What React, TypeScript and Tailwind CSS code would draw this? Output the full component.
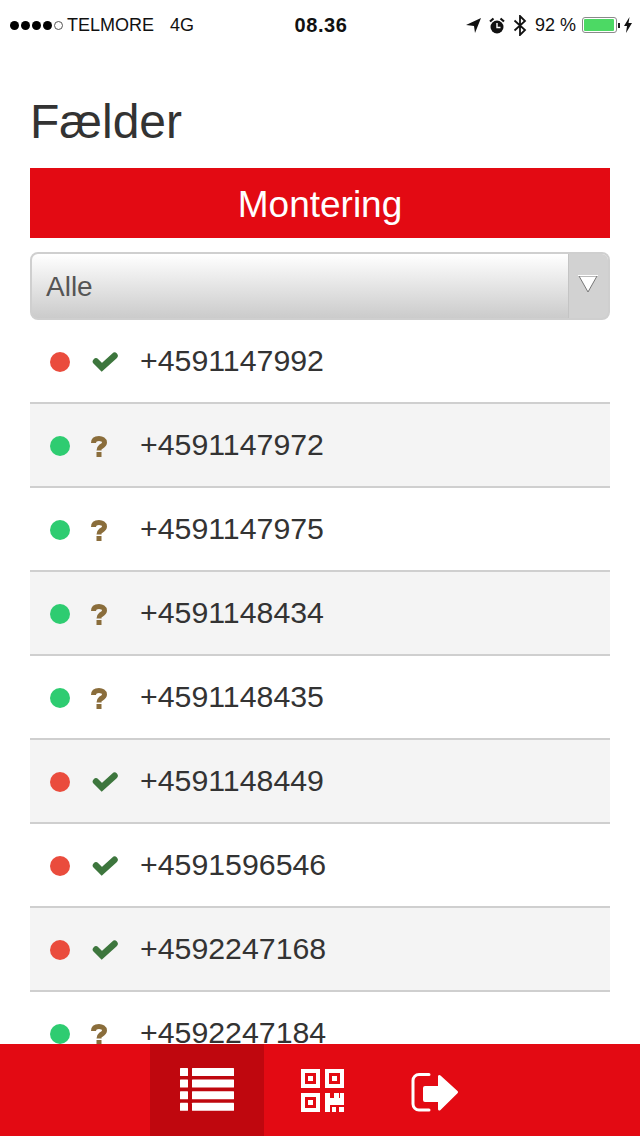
const traps = [
  { number: "+4591147992", ok: true },
  { number: "+4591147972", ok: false },
  { number: "+4591147975", ok: false },
  { number: "+4591148434", ok: false },
  { number: "+4591148435", ok: false },
  { number: "+4591148449", ok: true },
  { number: "+4591596546", ok: true },
  { number: "+4592247168", ok: true },
  { number: "+4592247184", ok: false },
];

function StatusBar() {
  return (
    <div className="flex h-[50px] items-center justify-between bg-white pl-[10px] pr-[8px] text-[18px] leading-none text-[#111]">
      <div className="flex w-[230px] items-center">
        <div className="flex items-center gap-[2px]">
          {[0, 1, 2, 3].map((i) => (
            <span key={i} className="h-[9px] w-[9px] rounded-full bg-black" />
          ))}
          <span className="h-[9px] w-[9px] rounded-full border border-[#555]" />
        </div>
        <span className="ml-[4px]">TELMORE</span>
        <span className="ml-[16px]">4G</span>
      </div>
      <span className="text-[20px] font-bold tracking-[0.6px]">08.36</span>
      <div className="flex w-[230px] items-center justify-end">
        <svg width="15" height="15" viewBox="0 0 15 15" className="mr-[8px]">
          <path d="M0 7 15 0 9 15 8 8z" fill="#111" />
        </svg>
        <svg width="16" height="17" viewBox="0 0 16 17" className="mr-[8px]">
          <circle cx="8" cy="10" r="6.500" fill="#111" />
          <path d="M1 4.500 4.500 1.500M15 4.500 11.500 1.500" stroke="#111" strokeWidth="2.200" fill="none" />
          <path d="M8 6v4.500h3.500" stroke="#fff" strokeWidth="1.400" fill="none" />
        </svg>
        <svg width="14" height="21" viewBox="0 0 14 21" className="mr-[8px]">
          <path d="M1.500 5.500 12 15 7 20V1l5 5L1.500 15.500" stroke="#111" strokeWidth="1.800" fill="none" />
        </svg>
        <span className="mr-[1px]">92 %</span>
        <div className="ml-[5px] flex h-[16px] w-[35px] items-center rounded-[3px] border border-[#8a8a8a] p-[1px]">
          <div className="h-full w-[30px] rounded-[1px] bg-[#4cd964]" />
        </div>
        <span className="ml-[1px] h-[5px] w-[2px] bg-[#222]" />
        <svg width="8" height="16" viewBox="0 0 8 16" className="ml-[4px]">
          <path d="M5.500 0 0 9h3l-1 7 6-10H4.500z" fill="#111" />
        </svg>
      </div>
    </div>
  );
}

function SelectBox() {
  return (
    <div className="mt-[14px] flex h-[68px] items-stretch rounded-[8px] border-2 border-[#cfcfcf] bg-gradient-to-b from-white to-[#cbcbcb]">
      <span className="flex flex-1 items-center pl-[14px] pt-[2px] text-[28px] text-[#555]">Alle</span>
      <div className="flex w-[40px] justify-center rounded-r-[6px] border-l border-[#c4c4c4] bg-[#d2d2d2] pr-[2px] pt-[21px]">
        <svg width="20" height="18" viewBox="0 0 20 18">
          <path d="M1 1h18L10 17z" fill="#fff" stroke="#777" strokeWidth="1" />
          <path d="M0 0h20v1H0z" fill="#fff" />
        </svg>
      </div>
    </div>
  );
}

function CheckIcon() {
  return (
    <svg width="26" height="20" viewBox="0 0 26 20" className="ml-[1px]">
      <path d="M4 9.500 9.800 15.300 22.500 3.800" stroke="#3d763d" strokeWidth="6.500" strokeLinecap="round" fill="none" />
    </svg>
  );
}

function QuestionIcon() {
  return (
    <svg width="16" height="21" viewBox="0 0 16 21">
      <path
        d="M2.500 7C2.500 3.500 5 2.500 8 2.500c3 0 5.500 1.500 5.500 4 0 2.500-2.500 3.500-4 4.500C8.500 11.700 8 12.500 8 14.500"
        stroke="#8a6d3b"
        strokeWidth="5"
        fill="none"
      />
      <rect x="5.500" y="16" width="5" height="5" fill="#8a6d3b" />
    </svg>
  );
}

function TrapRow({ number, ok, index }: { number: string; ok: boolean; index: number }) {
  return (
    <div
      className={`flex h-[84px] shrink-0 items-center border-b-2 border-[#cfcfcf] pl-[20px] pt-[2px] ${
        index % 2 === 1 ? "bg-[#f4f4f4]" : "bg-white"
      }`}
    >
      <span className={`h-[20px] w-[20px] rounded-full ${ok ? "bg-[#ea4c3d]" : "bg-[#2ecc71]"}`} />
      <span className="ml-[21px] flex w-[29px]">{ok ? <CheckIcon /> : <QuestionIcon />}</span>
      <span className="ml-[20px] pb-[2px] text-[30.300px] text-[#333]">{number}</span>
    </div>
  );
}

function Finder({ x, y }: { x: number; y: number }) {
  return (
    <g>
      <rect x={x + 2} y={y + 2} width="15" height="15" fill="none" stroke="#fff" strokeWidth="4" />
      <rect x={x + 7} y={y + 7} width="5" height="5" fill="#fff" />
    </g>
  );
}

function QrIcon() {
  return (
    <svg width="43" height="43" viewBox="0 0 43 43" fill="#fff">
      <Finder x={0} y={0} />
      <Finder x={24} y={0} />
      <Finder x={0} y={24} />
      <rect x="24" y="24" width="5" height="19" />
      <rect x="24" y="29" width="19" height="7" />
      <rect x="33" y="24" width="5" height="5" />
      <rect x="39" y="24" width="4" height="5" />
      <rect x="31" y="38" width="4" height="5" />
      <rect x="38" y="38" width="5" height="5" />
    </svg>
  );
}

export default function App() {
  return (
    <div className="relative h-[1136px] w-[640px] overflow-hidden bg-white font-['Liberation_Sans',Arial,sans-serif]">
      <StatusBar />
      <div className="px-[30px]">
        <h1 className="mt-[42px] text-[48px] leading-[60px] text-[#333]">Fælder</h1>
        <div className="mt-[16px] flex h-[70px] items-center justify-center bg-[#e30a13] pt-[3px] text-[37px] text-white">
          Montering
        </div>
        <SelectBox />
        <div className="flex flex-col">
          {traps.map((t, i) => (
            <TrapRow key={t.number} number={t.number} ok={t.ok} index={i} />
          ))}
        </div>
      </div>

      <nav className="absolute inset-x-0 bottom-0 flex h-[92px] bg-[#e30a13] pl-[150px] text-white">
        <div className="flex w-[114px] items-center justify-center bg-[#bf070e]">
          <svg width="54" height="44" viewBox="0 0 54 44" fill="#fff">
            {[0, 1, 2, 3].map((i) => (
              <g key={i}>
                <rect x="0" y={i * 11.600} width="8" height="8" rx="0.500" />
                <rect x="12" y={i * 11.600} width="42" height="8" rx="0.500" />
              </g>
            ))}
          </svg>
        </div>
        <div className="flex w-[116px] items-center justify-center">
          <QrIcon />
        </div>
        <div className="flex w-[108px] items-center justify-center pt-[4px]">
          <svg width="47" height="40" viewBox="0 0 47 40" fill="none">
            <path d="M18 2.500H8A6 6 0 0 0 2 8.500V32a6 6 0 0 0 6 6h10" stroke="#fff" strokeWidth="3" strokeLinecap="round" />
            <path
              d="M12 16a2 2 0 0 1 2-2h13V4.500c0-1.500 1.500-2 2.500-1L46.500 19c.7.700.7 1.500 0 2.200L29.500 38c-1 1-2.500.500-2.500-1V30H14a2 2 0 0 1-2-2z"
              fill="#fff"
            />
          </svg>
        </div>
      </nav>
    </div>
  );
}
